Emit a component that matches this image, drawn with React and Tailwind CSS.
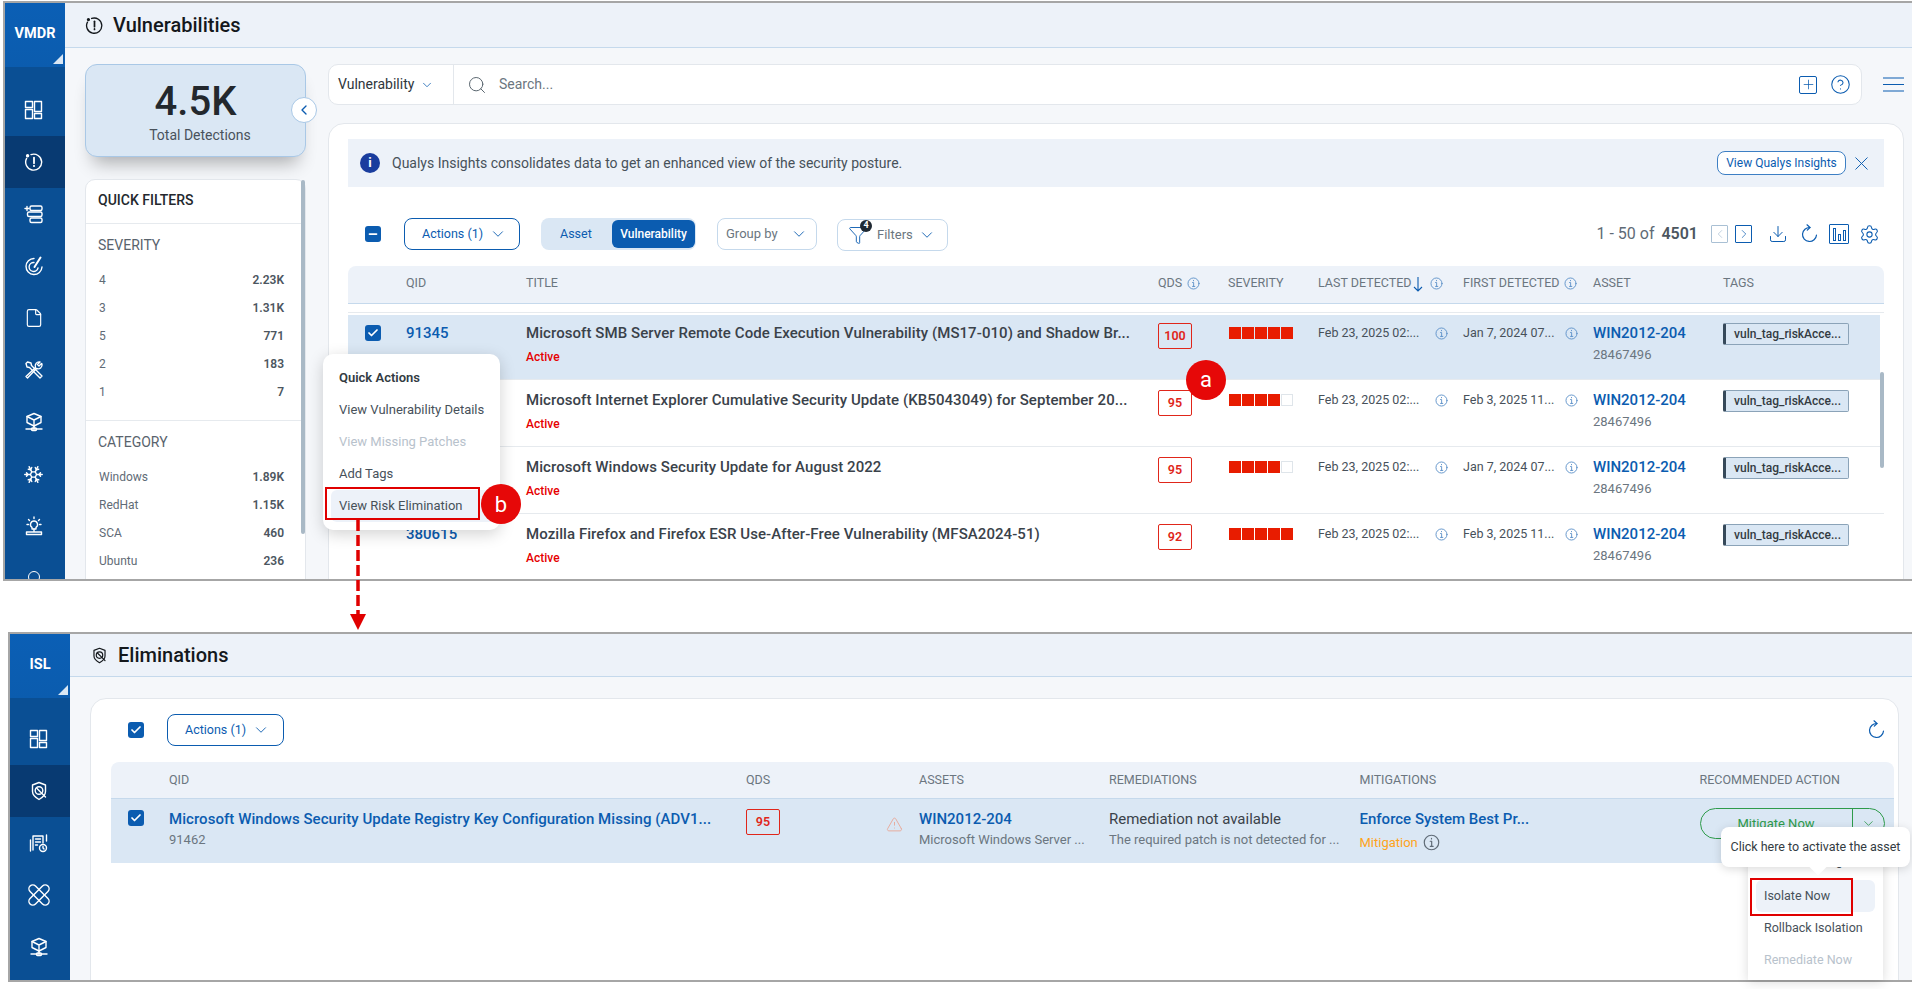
import { Check, ChevronDown, ChevronLeft, ChevronRight, Download, Filter, Minus, Search, Settings, X, Plus, CircleHelp, File, Snowflake, TriangleAlert } from "lucide-react";

// column templates, both tables are laid out on these
const vulnCols = "grid grid-cols-[58px_120px_632px_70px_90px_145px_130px_130px_1fr]";
const elimCols = "grid grid-cols-[58px_577px_173px_190px_250.5px_1fr]";

const rows = [
  { qid: "91345", title: "Microsoft SMB Server Remote Code Execution Vulnerability (MS17-010) and Shadow Br...", qds: 100, sev: 5, first: "Jan 7, 2024 07...", selected: true },
  { qid: "", title: "Microsoft Internet Explorer Cumulative Security Update (KB5043049) for September 20...", qds: 95, sev: 4, first: "Feb 3, 2025 11..." },
  { qid: "", title: "Microsoft Windows Security Update for August 2022", qds: 95, sev: 4, first: "Jan 7, 2024 07..." },
  { qid: "380615", title: "Mozilla Firefox and Firefox ESR Use-After-Free Vulnerability (MFSA2024-51)", qds: 92, sev: 5, first: "Feb 3, 2025 11..." },
];

const severity = [["4", "2.23K"], ["3", "1.31K"], ["5", "771"], ["2", "183"], ["1", "7"]];
const category = [["Windows", "1.89K"], ["RedHat", "1.15K"], ["SCA", "460"], ["Ubuntu", "236"]];

const Svg = ({ children, size = 20, className = "", sw = 1.4 }) => (
  <svg width={size} height={size} viewBox="0 0 20 20" fill="none" stroke="currentColor" strokeWidth={sw} strokeLinecap="round" strokeLinejoin="round" className={className}>
    {children}
  </svg>
);

const DashIcon = () => (
  <Svg>
    <rect x="1.5" y="1.5" width="7" height="6" />
    <rect x="1.5" y="9.5" width="7" height="9" />
    <rect x="10.5" y="1.5" width="7" height="10" />
    <rect x="10.5" y="13.5" width="7" height="5" />
  </Svg>
);

const AlertCycle = ({ size = 20 }) => (
  <Svg size={size}>
    <path d="M7 2.600A8 8 0 1 1 2.600 6.400" />
    <circle cx="3.600" cy="3.800" r="1" fill="currentColor" />
    <path d="M10 5.600v5.600" strokeWidth="1.8" />
    <path d="M10 13.600v.6" strokeWidth="1.8" />
  </Svg>
);

const StackIcon = () => (
  <Svg>
    <rect x="6" y="2" width="12" height="4.5" rx="1.5" />
    <rect x="3.5" y="8" width="14.5" height="4.5" rx="1.5" />
    <rect x="6" y="14" width="12" height="4.5" rx="1.5" />
    <path d="M1 4.5h4M3 2.5v4" />
  </Svg>
);

const RadarIcon = () => (
  <Svg>
    <path d="M10 2.500A8 8 0 1 0 18 11" />
    <path d="M10 6.500A4.500 4.500 0 1 0 14 12" />
    <path d="M16.500 1.500 10.500 11" strokeWidth="2" />
  </Svg>
);

const ToolsIcon = () => (
  <Svg>
    <path d="M3 7 2 3.500 3.500 2l3.500 1 .5 2.500L18 16l-2 2L5.500 7.500z" />
    <path d="M17.500 3.500 15 6l-1.500-1.500L16 2a4 4 0 0 0-4.500 5.500L2 16.500 3.500 18 12.500 8.500A4 4 0 0 0 18 4z" />
  </Svg>
);

const CubeIcon = () => (
  <Svg>
    <path d="M10 1.500 17 4.500v6L10 14l-7-3.500v-6z" />
    <path d="M3 4.500 10 8l7-3.500M10 8v6" />
    <path d="M10 14v3M2 17h16" />
    <rect x="7.500" y="16" width="5" height="2.500" rx="1" />
  </Svg>
);

const LampIcon = () => (
  <Svg>
    <path d="M10 5a3.500 3.500 0 0 0-2 6.400V13h4v-1.600A3.500 3.500 0 0 0 10 5z" />
    <path d="M10 1v1.500M4.500 3.500l1 1M15.500 3.500l-1 1M3 8.500h1.500M17 8.500h-1.500" />
    <path d="M10 13v3M2.500 16h15v2.500h-15z" />
  </Svg>
);

const ShieldTarget = ({ size = 20 }) => (
  <Svg size={size}>
    <path d="M10 1.500 16.500 4v6.500c0 3.500-3 6-6.500 8-3.500-2-6.500-4.500-6.500-8V4z" />
    <circle cx="10" cy="9.500" r="3.800" />
    <path d="M7.800 7.300l4.400 4.400M12.500 12l4 4" />
  </Svg>
);

const ListGear = () => (
  <Svg>
    <path d="M4 17V3h10v7" />
    <path d="M6.500 6h5M6.500 9h5M6.500 12h2" />
    <path d="M1.500 7v11M17.500 2v6" />
    <circle cx="14" cy="15" r="3.500" />
    <path d="M14 13.500V15l1 1" />
  </Svg>
);

// two crossed plasters
const CrossBands = () => (
  <Svg size={22} sw={1.3}>
    <rect x="6.500" y="-1.500" width="7" height="23" rx="3.500" transform="rotate(45 10 10)" />
    <rect x="6.500" y="-1.500" width="7" height="23" rx="3.500" transform="rotate(-45 10 10)" />
  </Svg>
);

const Hamburger = () => (
  <svg width="21" height="15" viewBox="0 0 21 15" stroke="#0b5cb0" strokeWidth="1.1" className="ml-[21px]">
    <path d="M0 1h21M0 7.500h21M0 14h21" />
  </svg>
);

const RefreshIcon = ({ className = "" }) => (
  <Svg className={className} sw={1.2}>
    <path d="M11 3.500A7 7 0 1 0 17.500 11" />
    <path d="M8 .8 11 3.500 8.300 6.200" />
  </Svg>
);

const InfoDot = ({ size = 13, className = "text-[#5a90c8]" }) => (
  <Svg size={size} className={className}>
    <circle cx="10" cy="10" r="8.500" />
    <path d="M8.500 8.500H10.200V14.500M8.500 14.500h3.500M10 5.200v.6" />
  </Svg>
);

const Tick = () => (
  <span className="flex h-[16px] w-[16px] items-center justify-center rounded-[3px] bg-[#0b5cb0]">
    <Check size={12} strokeWidth={3.5} className="text-white" />
  </span>
);

const ModuleBlock = ({ label }) => (
  <div className="relative flex h-[64px] items-center justify-center bg-gradient-to-b from-[#0b5fb5] to-[#0b5cae] pb-[2px] text-[14.5px] font-bold text-white">
    {label}
    <svg width="10" height="10" viewBox="0 0 10 10" className="absolute bottom-[3px] right-[2px]">
      <polygon points="10,0 10,10 0,10" fill="#dae7f4" />
    </svg>
  </div>
);

const NavItem = ({ active, children }) => (
  <div className={`flex h-[52px] shrink-0 items-center justify-center pr-[3px] text-white ${active ? "bg-[#083a72]" : ""}`}>{children}</div>
);

const QdsBox = ({ value }) => (
  <div className="flex h-[26px] w-[34px] items-center justify-center rounded-[2px] border border-[#e0261a] text-[12.5px] font-semibold text-[#e0261a]">{value}</div>
);

const SevBars = ({ level }) => (
  <div className="ml-px mt-[4px] flex gap-px">
    {[1, 2, 3, 4, 5].map((n) => (
      <span key={n} className={n <= level ? "h-[12px] w-[12px] bg-[#e81c00]" : "h-[12px] w-[12px] border border-[#dfe5ea] bg-white"} />
    ))}
  </div>
);

const FilterRows = ({ items }) =>
  items.map(([k, v]) => (
    <div key={k} className="flex h-[28px] items-center justify-between pl-[13px] pr-[21px] text-[12px] text-[#5f6b76]">
      <span>{k}</span>
      <span className="font-semibold text-[#4c5660]">{v}</span>
    </div>
  ));

const HeadCell = ({ children, info }) => (
  <div className="flex items-center gap-[5px] text-[12.5px] text-[#6b7680]">
    {children}
    {info && <InfoDot />}
  </div>
);

const VulnRow = ({ row }) => (
  <div className={`${vulnCols} h-[67px] border-b border-[#e6eaee] ${row.selected ? "mr-[4px] border-t-2 border-t-white bg-[#dae7f4] pt-[8px]" : "pt-[10px]"}`}>
    <div className="pl-[17px] pt-[2px]">{row.selected && <Tick />}</div>
    <div className="text-[15px] font-medium leading-[20px] text-[#0b5cb0]">{row.qid}</div>
    <div>
      <div className="truncate text-[15px] font-medium leading-[20px] tracking-[0.07px] text-[#3a424a]">{row.title}</div>
      <div className="mt-[6px] text-[12px] font-medium leading-[16px] text-[#e60000]">Active</div>
    </div>
    <QdsBox value={row.qds} />
    <SevBars level={row.sev} />
    <div className="flex h-[20px] items-center text-[12.5px] text-[#47515a]">
      <span className="w-[117px]">Feb 23, 2025 02:...</span>
      <InfoDot />
    </div>
    <div className="flex h-[20px] items-center text-[12.5px] text-[#47515a]">
      <span className="w-[102px]">{row.first}</span>
      <InfoDot />
    </div>
    <div>
      <div className="text-[15px] font-medium leading-[20px] text-[#0b5cb0]">WIN2012-204</div>
      <div className="mt-[4px] text-[13px] leading-[16px] text-[#6b7680]">28467496</div>
    </div>
    <div className="flex h-[22px] w-[126px] items-center rounded-[2px] border border-l-[3px] border-[#8ba3b8] border-l-[#36495a] bg-[#dae7f4] pl-[8px] text-[12px] font-medium text-[#333b42]">vuln_tag_riskAcce...</div>
  </div>
);

const Vulnerabilities = () => (
  <div className="ml-[3px] mt-px flex h-[580px] w-[1909px] overflow-hidden border-2 border-r-0 border-[#a6a6a6] bg-[#f5f7fa]">
    <div className="w-[60px] shrink-0 bg-[#0a4f94]">
      <ModuleBlock label="VMDR" />
      <div className="h-[17px]" />
      <NavItem><DashIcon /></NavItem>
      <NavItem active><AlertCycle /></NavItem>
      <NavItem><StackIcon /></NavItem>
      <NavItem><RadarIcon /></NavItem>
      <NavItem><File size={20} strokeWidth={1.4} /></NavItem>
      <NavItem><ToolsIcon /></NavItem>
      <NavItem><CubeIcon /></NavItem>
      <NavItem><Snowflake size={21} strokeWidth={1.6} /></NavItem>
      <NavItem><LampIcon /></NavItem>
      <NavItem><span className="-mt-[2px] block h-[12px] w-[12px] rounded-full border-[1.5px] border-white" /></NavItem>
    </div>

    <div className="min-w-0 flex-1">
      <div className="flex h-[45px] items-center gap-[9px] border-b border-[#c5d9ec] bg-[#edf2f9] pl-[20px] text-[20px] font-medium text-[#14181c]">
        <AlertCycle size={19} />
        Vulnerabilities
      </div>
      <div className="flex pl-[20px] pt-[16px]">
        <div className="mr-[22px] w-[221px] shrink-0">
          <div className="relative flex h-[93px] flex-col items-center justify-center rounded-[12px] border border-[#a9c8e6] bg-[#dae7f4] shadow-[0_14px_18px_-8px_rgba(0,0,0,0.3)]">
            <div className="text-[40px] font-medium leading-[48px] text-[#23282d]">4.5K</div>
            <div className="ml-[9px] text-[14px] leading-[18px] text-[#49525b]">Total Detections</div>
            <div className="absolute -right-[12px] top-[32px] flex h-[26px] w-[26px] items-center justify-center rounded-full border border-[#a9c8e6] bg-white">
              <ChevronLeft size={16} strokeWidth={2} className="text-[#0b5cb0]" />
            </div>
          </div>
          <div className="relative mt-[22px] h-[420px] rounded-t-[10px] border border-[#e3e7ec] bg-white">
            <div className="flex h-[44px] items-center border-b border-[#e6eaee] pb-[2px] pl-[12px] text-[14px] font-medium text-[#23282d]">QUICK FILTERS</div>
            <div className="pt-[11px]">
              <div className="mb-[11px] pl-[12px] text-[14px] leading-[20px] text-[#59636d]">SEVERITY</div>
              <FilterRows items={severity} />
            </div>
            <div className="mt-[14px] border-t border-[#e6eaee] pt-[11px]">
              <div className="mb-[11px] pl-[12px] text-[14px] leading-[20px] text-[#59636d]">CATEGORY</div>
              <FilterRows items={category} />
            </div>
            <div className="absolute right-0 top-0 h-[354px] w-[4px] rounded-[2px] bg-[#a9b9c6]" />
          </div>
        </div>

        <div className="w-[1576px] shrink-0">
          <div className="flex items-center">
            <div className="flex h-[41px] w-[1535px] items-center rounded-[10px] border border-[#e3e7ec] bg-white">
              <div className="flex h-full w-[125px] items-center gap-[6px] border-r border-[#e3e7ec] pl-[9px] text-[14px] text-[#2f363c]">
                Vulnerability
                <ChevronDown size={14} strokeWidth={1.3} className="text-[#0b5cb0]" />
              </div>
              <Search size={20} strokeWidth={1.2} className="ml-[13px] text-[#5b6770]" />
              <span className="ml-[12px] flex-1 text-[14px] text-[#6b7680]">Search...</span>
              <div className="mr-[10px] flex items-center gap-[13px] text-[#0b5cb0]">
                <span className="flex h-[18px] w-[18px] items-center justify-center rounded-[2px] border border-[#0b5cb0]">
                  <Plus size={15} strokeWidth={1.2} />
                </span>
                <CircleHelp size={21} strokeWidth={1.2} />
              </div>
            </div>
            <Hamburger />
          </div>

          <div className="mt-[18px] h-[480px] rounded-t-[16px] border border-[#e3e7ec] bg-white pl-[19px] pr-[19px] pt-[15px]">
            <div className="flex h-[48px] items-center bg-[#edf2f9] pl-[12px] pr-[11px]">
              <span className="flex h-[20px] w-[20px] items-center justify-center rounded-full bg-[#1a3d9e] text-[13px] font-bold text-white">i</span>
              <span className="ml-[12px] flex-1 text-[14px] text-[#47515a]">Qualys Insights consolidates data to get an enhanced view of the security posture.</span>
              <span className="flex h-[24px] w-[129px] items-center justify-center rounded-[8px] border border-[#3d7fc4] bg-white text-[12px] text-[#0b5cb0]">View Qualys Insights</span>
              <X size={23} strokeWidth={1} className="ml-[4px] text-[#0b5cb0]" />
            </div>

            <div className="mt-[31px] flex h-[32px] items-center pl-[17px] pr-[4px]">
              <span className="flex h-[16px] w-[16px] items-center justify-center rounded-[3px] bg-[#0b5cb0]">
                <Minus size={12} strokeWidth={3.5} className="text-white" />
              </span>
              <div className="ml-[23px] flex h-[32px] w-[116px] items-center gap-[6px] rounded-[8px] border border-[#0b5cb0] pl-[17px] text-[12.5px] text-[#0b5cb0]">
                Actions (1)
                <ChevronDown size={18} strokeWidth={1.2} />
              </div>
              <div className="ml-[21px] flex h-[32px] w-[155px] items-center rounded-[8px] bg-[#dae7f4] pl-[19px] text-[12.5px] text-[#0b5cb0]">
                <span className="w-[52px]">Asset</span>
                <span className="flex h-[28px] w-[83px] items-center justify-center rounded-[6px] bg-[#0b5cb0] text-[12px] font-medium text-white">Vulnerability</span>
              </div>
              <div className="ml-[21px] flex h-[32px] w-[100px] items-center justify-between rounded-[8px] border border-[#c5d9ec] pl-[8px] pr-[8px] text-[13px] text-[#6b7680]">
                Group by
                <ChevronDown size={18} strokeWidth={1.2} className="text-[#0b5cb0]" />
              </div>
              <div className="ml-[20px] mt-[2px] flex h-[32px] w-[111px] items-center rounded-[8px] border border-[#c5d9ec] pl-[10px] text-[13px] text-[#6b7680]">
                <div className="relative mr-[9px]">
                  <Filter size={20} strokeWidth={1.1} className="text-[#0b5cb0]" />
                  <span className="absolute -right-[4px] -top-[5px] flex h-[12px] w-[12px] items-center justify-center rounded-full bg-[#1f2933] text-[9px] font-bold text-white">4</span>
                </div>
                Filters
                <ChevronDown size={18} strokeWidth={1.2} className="ml-[5px] text-[#0b5cb0]" />
              </div>
              <div className="ml-auto flex items-center text-[#0b5cb0]">
                <span className="mr-[13px] text-[16px] text-[#5f6b76]">1 - 50 of <b className="ml-[3px] font-semibold text-[#4c5660]">4501</b></span>
                <span className="flex h-[18px] w-[17px] items-center justify-center rounded-[1px] border border-[#a9c0d4] text-[#a9c0d4]"><ChevronLeft size={14} strokeWidth={1.2} /></span>
                <span className="ml-[7px] flex h-[18px] w-[17px] items-center justify-center rounded-[1px] border border-[#0b5cb0]"><ChevronRight size={14} strokeWidth={1.2} /></span>
                <Download size={20} strokeWidth={1.2} className="ml-[16px]" />
                <RefreshIcon className="ml-[11px]" />
                <span className="ml-[10px] flex h-[20px] w-[20px] items-end justify-center gap-[2px] rounded-[1px] border border-[#0b5cb0] px-[2px] pb-[2px]">
                  <i className="h-[13px] w-[3px] border border-[#0b5cb0]" />
                  <i className="h-[7px] w-[3px] border border-[#0b5cb0]" />
                  <i className="h-[11px] w-[3px] border border-[#0b5cb0]" />
                </span>
                <Settings size={21} strokeWidth={1.2} className="ml-[10px]" />
              </div>
            </div>

            <div className={`${vulnCols} mt-[16px] h-[38px] items-center rounded-t-[8px] border-b border-[#c5d9ec] bg-[#edf2f9] pb-[2px]`}>
              <div />
              <HeadCell>QID</HeadCell>
              <HeadCell>TITLE</HeadCell>
              <HeadCell info>QDS</HeadCell>
              <HeadCell>SEVERITY</HeadCell>
              <HeadCell info>
                LAST DETECTED
                <svg width="10" height="16" viewBox="0 0 10 16" fill="none" stroke="#0b5cb0" strokeWidth="1.1" className="-ml-[3px] mr-[2px]"><path d="M5 1v14M1 11l4 4 4-4" /></svg>
              </HeadCell>
              <HeadCell info>FIRST DETECTED</HeadCell>
              <HeadCell>ASSET</HeadCell>
              <HeadCell>TAGS</HeadCell>
            </div>
            <div className="h-[9px] border-b border-[#e6eaee]" />
            <div className="relative">
              {rows.map((row) => (
                <VulnRow key={row.title} row={row} />
              ))}
              <div className="absolute right-0 top-[59px] h-[96px] w-[4px] rounded-[2px] bg-[#a9b9c6]" />
            </div>
          </div>
        </div>
      </div>
    </div>
  </div>
);

const Eliminations = () => (
  <div className="ml-[8px] mt-[51px] flex h-[350px] w-[1904px] overflow-hidden border-2 border-r-0 border-[#a6a6a6] bg-[#f5f7fa]">
    <div className="w-[60px] shrink-0 bg-[#0a4f94]">
      <ModuleBlock label="ISL" />
      <div className="h-[15px]" />
      <NavItem><DashIcon /></NavItem>
      <NavItem active><ShieldTarget /></NavItem>
      <NavItem><ListGear /></NavItem>
      <NavItem><CrossBands /></NavItem>
      <NavItem><CubeIcon /></NavItem>
    </div>
    <div className="min-w-0 flex-1">
      <div className="flex h-[43px] items-center gap-[10px] border-b border-[#c5d9ec] bg-[#edf2f9] pl-[21px] text-[20px] font-medium text-[#14181c]">
        <ShieldTarget size={17} />
        Eliminations
      </div>
      <div className="ml-[20px] mt-[21px] h-[300px] w-[1809px] rounded-t-[16px] border border-[#e3e7ec] bg-white pl-[20px] pr-[4px] pt-[15px]">
        <div className="flex h-[32px] items-center pl-[17px] pr-[8px]">
          <Tick />
          <div className="ml-[23px] flex h-[32px] w-[117px] items-center gap-[6px] rounded-[8px] border border-[#0b5cb0] pl-[17px] text-[12.5px] text-[#0b5cb0]">
            Actions (1)
            <ChevronDown size={18} strokeWidth={1.2} />
          </div>
          <RefreshIcon className="ml-auto text-[#0b5cb0]" />
        </div>
        <div className={`${elimCols} mt-[16px] h-[37px] items-center rounded-t-[8px] border-b border-[#c5d9ec] bg-[#edf2f9]`}>
          <div />
          <HeadCell>QID</HeadCell>
          <HeadCell>QDS</HeadCell>
          <HeadCell>ASSETS</HeadCell>
          <HeadCell>REMEDIATIONS</HeadCell>
          <div className="flex">
            <div className="w-[340px]"><HeadCell>MITIGATIONS</HeadCell></div>
            <HeadCell>RECOMMENDED ACTION</HeadCell>
          </div>
        </div>
        <div className={`${elimCols} h-[64px] bg-[#dae7f4] pt-[10px]`}>
          <div className="pl-[17px] pt-px"><Tick /></div>
          <div>
            <div className="text-[15px] font-medium leading-[20px] tracking-[0.05px] text-[#0b5cb0]">Microsoft Windows Security Update Registry Key Configuration Missing (ADV1...</div>
            <div className="mt-[3px] text-[13px] leading-[16px] text-[#6b7680]">91462</div>
          </div>
          <div className="flex items-start justify-between pr-[16px]">
            <QdsBox value={95} />
            <TriangleAlert size={17} strokeWidth={1.3} className="mt-[7px] text-[#e8a898]" />
          </div>
          <div>
            <div className="text-[15px] font-medium leading-[20px] text-[#0b5cb0]">WIN2012-204</div>
            <div className="mt-[3px] text-[13px] leading-[16px] text-[#6b7680]">Microsoft Windows Server ...</div>
          </div>
          <div>
            <div className="text-[15px] leading-[20px] text-[#3a424a]">Remediation not available</div>
            <div className="mt-[3px] text-[13px] leading-[16px] text-[#6b7680]">The required patch is not detected for ...</div>
          </div>
          <div className="flex">
            <div className="w-[340px]">
              <div className="text-[15px] font-medium leading-[20px] text-[#0b5cb0]">Enforce System Best Pr...</div>
              <div className="mt-[5px] flex items-center gap-[5px] text-[13px] leading-[16px] text-[#ffa31a]">
                Mitigation
                <InfoDot size={17} className="text-[#5f6b76]" />
              </div>
            </div>
            <div className="-mt-px flex h-[31px] w-[185px] shrink-0 rounded-full border border-[#2e9b4b] text-[13px] text-[#2e9b4b]">
              <span className="flex w-[152px] items-center justify-center border-r border-[#2e9b4b]">Mitigate Now</span>
              <span className="flex flex-1 items-center justify-center"><ChevronDown size={15} strokeWidth={1.3} /></span>
            </div>
          </div>
        </div>
      </div>
    </div>
  </div>
);

// overlays drawn over both frames
const Overlays = () => (
  <>
    <div className="absolute left-[323px] top-[354px] h-[176px] w-[177px] rounded-[10px] bg-white pl-[16px] text-[13px] text-[#47515a] shadow-[0_4px_16px_rgba(0,0,0,0.18)]">
      <div className="flex h-[40px] items-center pt-[8px] font-semibold text-[#333b42]">Quick Actions</div>
      <div className="flex h-[32px] items-center">View Vulnerability Details</div>
      <div className="flex h-[32px] items-center text-[#b8c2cc]">View Missing Patches</div>
      <div className="flex h-[32px] items-center">Add Tags</div>
      <div className="-ml-[8px] flex h-[32px] w-[165px] items-center rounded-[6px] bg-[#edf2f9] pl-[8px]">View Risk Elimination</div>
    </div>
    <div className="absolute left-[325px] top-[487px] h-[33px] w-[155px] border-2 border-[#e00000]" />
    <div className="absolute left-[481px] top-[484px] flex h-[40px] w-[40px] items-center justify-center rounded-full bg-[#e60808] text-[22px] text-white">b</div>
    <div className="absolute left-[1186px] top-[360px] flex h-[40px] w-[40px] items-center justify-center rounded-full bg-[#e60808] pb-[2px] text-[22px] text-white">a</div>
    <svg width="20" height="112" viewBox="0 0 20 112" className="absolute left-[348px] top-[520px]">
      <path d="M10 0V96" stroke="#e00000" strokeWidth="3.5" strokeDasharray="11 4" fill="none" />
      <polygon points="2,94 18,94 10,110" fill="#e00000" />
    </svg>

    <div className="absolute left-[1748px] top-[850px] h-[130px] w-[135px] rounded-t-[10px] bg-white text-[12.5px] leading-[18px] text-[#47515a] shadow-[0_2px_12px_rgba(0,0,0,0.15)]">
      <div className="h-[30px] pl-[16px] pt-[2px]">Rollback Mitigation</div>
      <div className="mx-[8px] flex h-[32px] items-center rounded-[6px] bg-[#edf2f9] pl-[8px]">Isolate Now</div>
      <div className="flex h-[32px] items-center pl-[16px]">Rollback Isolation</div>
      <div className="flex h-[32px] items-center pl-[16px] text-[#b8c2cc]">Remediate Now</div>
    </div>
    <div className="absolute left-[1721px] top-[827px] flex h-[40px] w-[189px] items-center justify-center rounded-[8px] bg-white text-[12.5px] text-[#333b42] shadow-[0_2px_10px_rgba(0,0,0,0.15)]">
      Click here to activate the asset
      <span className="absolute -bottom-[6px] left-[91px] h-[12px] w-[12px] rotate-45 bg-white" />
    </div>
    <div className="absolute left-[1750px] top-[878px] h-[38px] w-[103px] border-2 border-[#e00000]" />
  </>
);

export default function App() {
  return (
    <div className="relative h-[989px] w-[1912px] overflow-hidden bg-white font-[family-name:Roboto,sans-serif]">
      <Vulnerabilities />
      <Eliminations />
      <Overlays />
    </div>
  );
}
